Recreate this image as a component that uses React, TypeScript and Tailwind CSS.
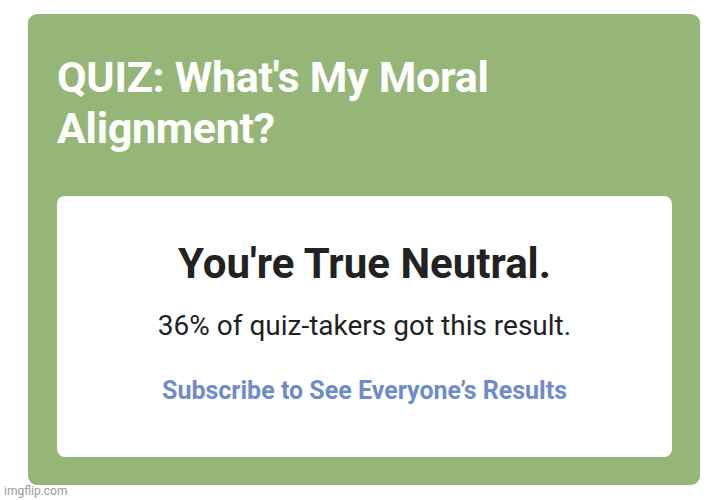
export default function App() {
  return (
    <div className="relative w-[728px] h-[500px] bg-white font-['Roboto',sans-serif]">
      <div className="pt-[14px] pl-[28px]">
        <div className="w-[672px] h-[471px] rounded-[9px] bg-[#95b677] pl-[29px] pr-[28px] pt-[38px] flex flex-col">
          <h1 className="text-white font-bold text-[43px] leading-[51px] tracking-[-0.3px] w-[480px]">
            QUIZ: What's My Moral Alignment?
          </h1>
          <div className="mt-[42px] h-[261px] rounded-[8px] bg-white flex flex-col items-center pt-[43px]">
            <div className="text-[#222] font-bold text-[42px] leading-[50px]">You're True Neutral.</div>
            <div className="mt-[20px] text-[#222] text-[28px] leading-[34px]">36% of quiz-takers got this result.</div>
            <div className="mt-[33px] text-[#6f8bc8] font-bold text-[25px] leading-[30px]">Subscribe to See Everyone’s Results</div>
          </div>
        </div>
      </div>
      <div className="absolute left-[4px] top-[484px] text-[12px] leading-[14px] text-[#9a9a9a]">imgflip.com</div>
    </div>
  );
}
